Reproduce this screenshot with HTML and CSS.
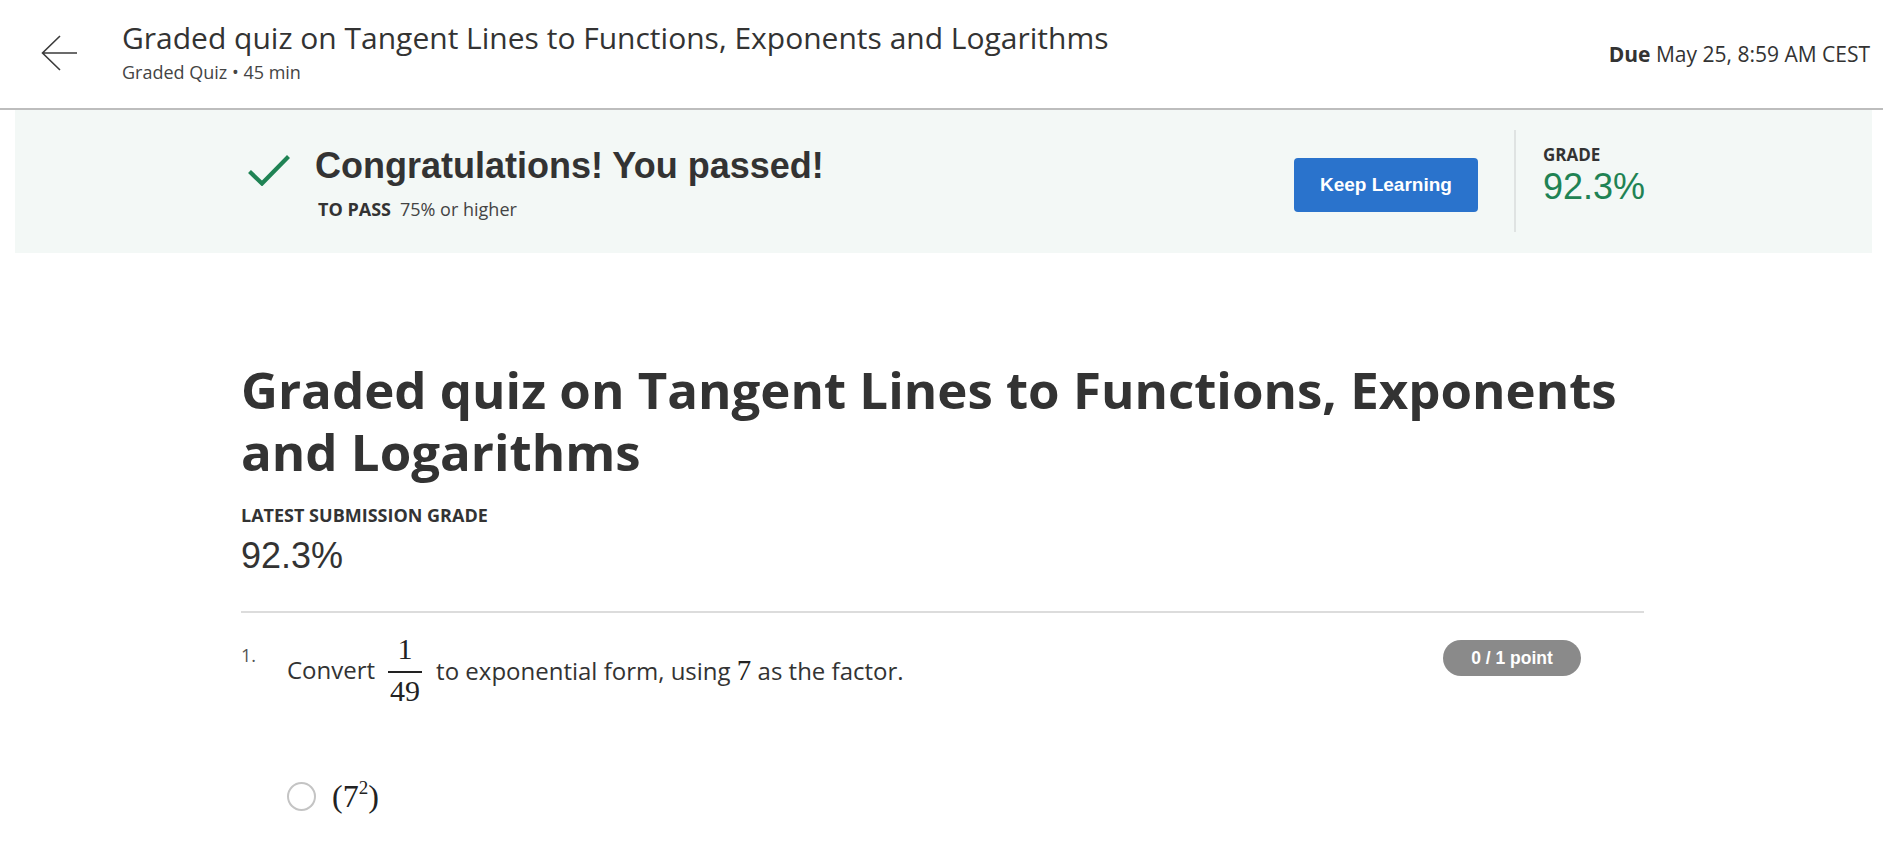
FILE: index.html
```html
<!DOCTYPE html>
<html lang="en">
<head>
<meta charset="utf-8">
<title>Graded quiz</title>
<link rel="stylesheet" href="styles.css">
</head>
<body>
<header class="topbar">
  <a class="back" href="#" aria-label="Back">
    <svg width="37" height="36" viewBox="0 0 37 36"><path d="M36 18H1.5M19 1L1.5 18L19 35" fill="none" stroke="#3b3b3b" stroke-width="1.6"/></svg>
  </a>
  <div class="titles">
    <div class="title">Graded quiz on Tangent Lines to Functions, Exponents and Logarithms</div>
    <div class="sub">Graded Quiz • 45 min</div>
  </div>
  <div class="due"><b>Due</b> May 25, 8:59 AM CEST</div>
</header>

<section class="banner">
  <div class="banner-inner">
    <div class="pass">
      <svg class="check" width="42" height="32" viewBox="0 0 42 32"><path d="M1.5 17.5L14 29.5L40.5 2.5" fill="none" stroke="#1f8354" stroke-width="4.2"/></svg>
      <div class="pass-text">
        <div class="congrats">Congratulations! You passed!</div>
        <div class="topass"><b>TO PASS</b><span>75% or higher</span></div>
      </div>
    </div>
    <button class="btn">Keep Learning</button>
    <div class="sep"></div>
    <div class="grade">
      <div class="grade-label">GRADE</div>
      <div class="grade-val">92.3%</div>
    </div>
  </div>
</section>

<main class="content">
  <h1 class="quiz-title">Graded quiz on Tangent Lines to Functions, Exponents and Logarithms</h1>
  <div class="latest-label">LATEST SUBMISSION GRADE</div>
  <div class="latest-val">92.3%</div>
  <hr class="rule">
  <div class="question">
    <div class="qnum">1.</div>
    <div class="qbody">
      <div class="qtext">
        <span>Convert</span>
        <span class="frac"><span class="num">1</span><span class="bar"></span><span class="den">49</span></span>
        <span>to exponential form, using <span class="m">7</span> as the factor.</span>
      </div>
      <div class="option">
        <span class="radio"></span>
        <span class="m opt">(7<sup>2</sup>)</span>
      </div>
    </div>
    <div class="badge">0 / 1 point</div>
  </div>
</main>
</body>
</html>
```
FILE: styles.css
```css
* { box-sizing: border-box; }
html, body { margin: 0; padding: 0; background: #fff; }
body { font-family: "Open Sans", "Liberation Sans", sans-serif; color: #333; }

.topbar {
  height: 110px;
  border-bottom: 2px solid #bdbdbd;
  display: flex;
  align-items: center;
  padding: 0 13px 0 41px;
}
.back { display: block; width: 37px; height: 36px; margin-top: -2px; }
.back svg { display: block; }
.titles { align-self: flex-start; padding-top: 19px; margin-left: 44px; }
.title { font-size: 30px; line-height: 38px; color: #333; }
.sub { font-size: 18px; line-height: 22px; margin-top: 4px; color: #444; }
.due { margin-left: auto; font-size: 21px; color: #333; }
.due b { font-weight: 700; }

.banner { background: #f3f8f6; margin: 0 11px 0 15px; }
.banner-inner {
  width: 1403px;
  margin: 0 auto;
  display: flex;
  align-items: flex-start;
  padding: 20px 0 21px;
}
.pass { display: flex; align-items: flex-start; margin-top: 15px; }
.check { display: block; margin: 9px 25px 0 6px; }
.congrats {
  font-family: "Liberation Sans", Arial, sans-serif;
  font-weight: 700;
  font-size: 36px;
  line-height: 42px;
  color: #333;
}
.topass { font-size: 18px; line-height: 24px; margin-top: 10px; margin-left: 3px; color: #444; }
.topass b { color: #333; margin-right: 9px; }
.btn {
  margin-left: auto;
  margin-top: 28px;
  width: 184px;
  height: 54px;
  border: none;
  border-radius: 4px;
  background: #2a73cc;
  color: #fff;
  font-family: "Liberation Sans", Arial, sans-serif;
  font-weight: 700;
  font-size: 19px;
  padding: 0;
}
.sep { width: 2px; height: 102px; background: #dfe3e2; margin-left: 36px; }
.grade { margin-left: 27px; margin-top: 14px; }
.grade-label { font-size: 17px; font-weight: 700; line-height: 22px; color: #333; }
.grade-val {
  font-family: "Liberation Sans", Arial, sans-serif;
  font-size: 36px;
  line-height: 40px;
  margin-top: 1px;
  color: #1f8354;
}

.content { width: 1403px; margin: 0 auto; position: relative; left: 1px; }
.quiz-title {
  margin: 105px 0 0;
  font-size: 51px;
  line-height: 62px;
  font-weight: 700;
  color: #333;
}
.latest-label { margin-top: 22px; font-size: 18px; font-weight: 700; line-height: 22px; color: #333; }
.latest-val {
  margin-top: 10px;
  font-family: "Liberation Sans", Arial, sans-serif;
  font-size: 36px;
  line-height: 40px;
  color: #333;
}
.rule { margin: 35px 0 0; border: none; height: 2px; background: #dcdcdc; }

.question { display: flex; align-items: flex-start; padding-top: 21px; }
.qnum { width: 46px; font-size: 18px; line-height: 22px; margin-top: 10px; color: #555; }
.qbody { flex: 1; }
.qtext { display: flex; align-items: center; font-size: 24px; line-height: 30px; color: #333; }
.frac { display: flex; flex-direction: column; align-items: center; margin: 0 14px 0 13px; width: 34px; }
.num, .den { font-family: "Liberation Serif", "DejaVu Serif", serif; font-size: 30px; line-height: 30px; color: #222; }
.num { margin-bottom: 7px; }
.bar { width: 34px; height: 2px; background: #222; }
.den { margin-top: 3px; }
.m { font-family: "Liberation Serif", "DejaVu Serif", serif; font-size: 29px; color: #222; }
.option { display: flex; align-items: center; margin-top: 72px; margin-left: 0; }
.radio { width: 29px; height: 29px; border: 2px solid #c4c4c4; border-radius: 50%; }
.opt { margin-left: 16px; font-size: 32px; line-height: 36px; }
.opt sup { font-size: 19px; vertical-align: 13px; line-height: 0; }
.badge {
  margin: 6px 63px 0 0;
  width: 138px;
  height: 36px;
  border-radius: 18px;
  background: #8a8a8a;
  color: #fff;
  font-family: "Liberation Sans", Arial, sans-serif;
  font-weight: 700;
  font-size: 17.5px;
  display: flex;
  align-items: center;
  justify-content: center;
}
```
